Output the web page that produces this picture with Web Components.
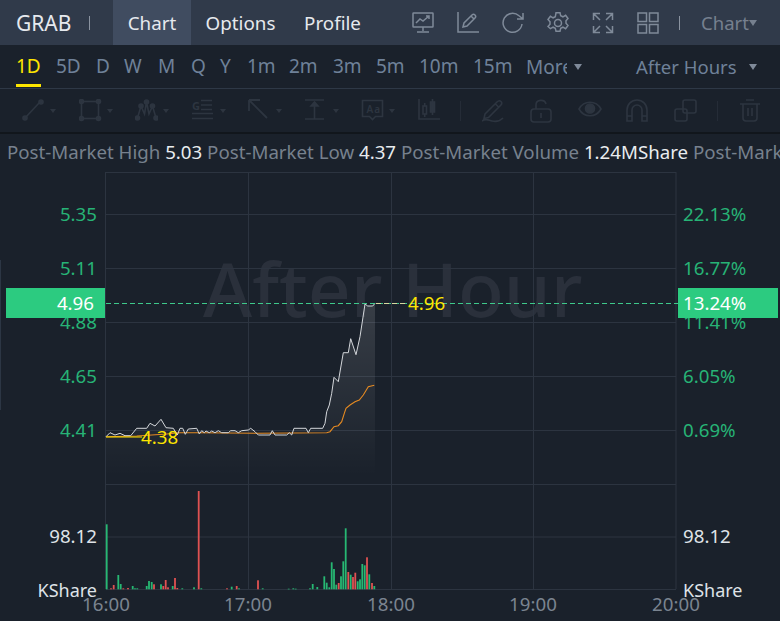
<!DOCTYPE html>
<html><head><meta charset="utf-8"><title>GRAB</title>
<style>
html,body{margin:0;padding:0;background:#1a212b;overflow:hidden}
body{width:780px;height:621px;font-family:"Noto Sans","Open Sans",sans-serif;font-size:18px}
</style></head>
<body>
<stock-app>
  <top-bar symbol="GRAB"></top-bar>
  <period-bar></period-bar>
  <draw-tools></draw-tools>
  <stat-strip></stat-strip>
  <price-chart></price-chart>
</stock-app>
<script>
const def=(name,html,setup)=>customElements.define(name,class extends HTMLElement{
  constructor(){super();this.attachShadow({mode:'open'}).innerHTML=html;}
  connectedCallback(){if(setup)setup(this);}
});
const svg=(w,h,body,extra='')=>`<svg width="${w}" height="${h}" viewBox="0 0 ${w} ${h}" fill="none" stroke="currentColor" ${extra}>${body}</svg>`;

def('stock-app',`<style>:host{display:flex;flex-direction:column;width:780px;height:621px;overflow:hidden;position:relative;background:#1a212b}
.edge{position:absolute;left:0;top:260px;width:1px;height:150px;background:#2c3644}</style><slot></slot><div class="edge"></div>`);

const topIcons=[
 `<rect x="1" y="1" width="20" height="14" rx=".5"/><path d="M4 11l4-4 3 2 6-5M14 4h3v3M11 15v4M5 20h12"/>`,
 `<path d="M1 0v20h21"/><path d="M6 15l1-4 8-8c1-1 2-1 3 0s1 2 0 3l-8 8zM14 4l3 3"/>`,
 `<path d="M20 12a9.5 9.5 0 1 1-3-8.2L21 7M21 1v6h-6"/>`,
 `<circle cx="11" cy="11" r="3.5"/><path d="M9 0.8h4l.7 3 2.2 1 2.7-1.5 2.4 3.2-2 2.2v2.6l2 2.2-2.4 3.2-2.7-1.5-2.2 1-.7 3H9l-.7-3-2.2-1-2.7 1.5L1 14.500l2-2.200V9.700L1 7.500l2.400-3.200 2.700 1.500 2.200-1z"/>`,
 `<path d="M1.500 8V1.500H8M20.500 8V1.500H14M1.500 14v6.500H8M20.500 14v6.500H14M2 2l6 6M20 2l-6 6M2 20l6-6M20 20l-6-6"/>`,
 `<rect x="1" y="1" width="8.500" height="8.500"/><rect x="12.500" y="1" width="8.500" height="8.500"/><rect x="1" y="12.500" width="8.500" height="8.500"/><rect x="12.500" y="12.500" width="8.500" height="8.500"/>`
];
def('top-bar',`<style>
:host{display:flex;align-items:stretch;height:45px;background:#303a4a;color:#e6e9ee;flex:none;white-space:nowrap;font-size:18.800px}
.sym{margin-left:16px;width:73px;align-self:center;font-size:21px}
.sep{width:1px;height:14px;background:#8a93a0;align-self:center}
.tabs{display:flex;margin-left:23px}
.tab{display:flex;align-items:center;justify-content:center}
.tab.on{background:#404c60}
.icons{display:flex;align-items:center;gap:23px;margin-left:37px;color:#7f8a99}
.icons svg{display:block;stroke-width:1.500}
.r{display:flex;align-items:center;margin-left:20px;gap:21px;color:#76808f;font-size:18.500px}
.car{width:0;height:0;border:4.500px solid transparent;border-top:6px solid #76808f;border-bottom:0;margin-left:-21px}
</style>
<div class="sym">GRAB</div><div class="sep"></div>
<div class="tabs"><div class="tab on" style="width:78px">Chart</div><div class="tab" style="width:99px">Options</div><div class="tab" style="width:85px">Profile</div></div>
<div class="icons">${topIcons.map(p=>svg(22,22,p)).join('')}</div>
<div class="r"><div class="sep"></div><span>Chart</span><i class="car"></i></div>`);

const periods=[['1D',40],['5D',40],['D',28],['W',34],['M',33],['Q',29],['Y',27],['1m',42],['2m',44],['3m',43],['5m',43],['10m',54],['15m',53]];
def('period-bar',`<style>
:host{display:flex;align-items:center;height:43px;flex:none;background:#1a212b;border-bottom:1px solid #2e3846;box-sizing:content-box;color:#6f8199;white-space:nowrap;position:relative;font-size:19px}
.list{display:flex;margin-left:16px}
.p{position:relative;line-height:43px;flex:none}
.p.on{color:#fde500}
.p.on::after{content:"";position:absolute;left:0;width:25px;bottom:1px;height:3px;background:#fde500}
.more{width:41px;overflow:hidden}
.car{width:0;height:0;border:4.500px solid transparent;border-top:6px solid #7f8a99;border-bottom:0;margin-left:7px}
.ah{margin-left:54px;font-size:18.500px}.c2{margin-left:12px}
</style>
<div class="list">${periods.map(([p,w],i)=>`<div class="p${i?'':' on'}" style="width:${w}px">${p}</div>`).join('')}</div>
<div class="more">More</div><i class="car"></i>
<div class="ah">After Hours</div><i class="car c2"></i>`);

const tools=[
 [`<path d="M3 19L18 3"/><circle cx="3" cy="19" r="2" fill="currentColor"/><circle cx="19" cy="3" r="2" fill="currentColor"/>`,1],
 [`<rect x="2.500" y="2.500" width="17" height="17"/><circle cx="2.500" cy="2.500" r="2" fill="currentColor"/><circle cx="19.500" cy="2.500" r="2" fill="currentColor"/><circle cx="2.500" cy="19.500" r="2" fill="currentColor"/><circle cx="19.500" cy="19.500" r="2" fill="currentColor"/>`,1],
 [`<path d="M2.500 19L6 7l3.500 8L11.500 3l2.500 12 3.500-8 3.500 12"/><circle cx="2.500" cy="19" r="2" fill="currentColor"/><circle cx="6" cy="7" r="2" fill="currentColor"/><circle cx="11.500" cy="3" r="2" fill="currentColor"/><circle cx="17.500" cy="7" r="2" fill="currentColor"/><circle cx="21" cy="19" r="2" fill="currentColor"/>`,1],
 [`<path d="M9 1.500h11M9 6h11M9 10.500h11M0 14.500h21M0 19.500h21"/><text x="0" y="11" font-family="Noto Sans" font-size="11" font-weight="700" fill="currentColor" stroke="none">G</text>`,1],
 [`<path d="M1 1l18 18M1 1v11M1 1h11" stroke-width="1.800"/>`,1],
 [`<path d="M0 1h19M0 20h19M9.500 3v17"/><path d="M6 7l3.500-4L13 7z" fill="currentColor"/>`,1],
 [`<path d="M1.500 1.500h20v16h-7l-3 3-3-3h-7z"/><text x="5.500" y="14" font-family="Noto Sans" font-size="10" font-weight="600" letter-spacing="1" fill="currentColor" stroke="none">Aa</text>`,1],
 [`<path d="M1 0v20h21"/><rect x="5" y="7" width="3.500" height="8"/><rect x="12.500" y="3" width="4" height="10" fill="currentColor"/><path d="M6.700 4v3M6.700 15v3M14.500 0v3M14.500 13v3"/>`,0],
];
const tools2=[
 `<path d="M3 15L15 3c1.500-1.500 3-1.500 4-.5s1 2.500-.5 4L6.500 18.500 2 19.500zM13.500 5l3.500 3.500M0 22c4-3 6-1 10 0s8 0 11-3"/>`,
 `<rect x="1" y="10" width="20" height="13" rx="3"/><path d="M6 10V6c0-6 9-6 10-1M11 14v5"/>`,
 `<path d="M1 10c5-9 17-9 22 0-5 9-17 9-22 0z"/><circle cx="12" cy="9.500" r="4.500" fill="currentColor"/>`,
 `<path d="M1 22V11a10 10 0 0 1 20 0v11h-5V11a5 5 0 0 0-10 0v11zM1 17h5M16 17h5"/>`,
 `<rect x="1" y="10" width="12" height="12" rx="2"/><rect x="9" y="1" width="13" height="13" rx="2"/>`
];
const trash=`<path d="M0 5h20M6 1h8M3 5v14c0 2 1 3 3 3h8c2 0 3-1 3-3V5M8 9v8M12 9v8"/>`;
def('draw-tools',`<style>
:host{display:flex;align-items:center;height:43px;flex:none;background:#1a212b;border-bottom:2px solid #11161c;color:#2d3540;padding-left:22px;box-sizing:content-box}
.t{display:flex;align-items:center;width:56.500px;flex:none}
svg{display:block;stroke-width:1.600}
.car{width:0;height:0;border:3px solid transparent;border-top:4px solid #2d3540;border-bottom:0;margin-left:5px}
.d{width:1px;height:20px;background:#252c37;flex:none}
.k{width:48px;flex:none}
</style>
${tools.map(([p,c])=>`<div class="t" style="${c?'':'width:42px'}">${svg(23,23,p)}${c?'<i class="car"></i>':''}</div>`).join('')}
<div class="d"></div><div style="width:21px;flex:none"></div>
${tools2.map(p=>`<div class="k">${svg(24,24,p)}</div>`).join('')}
<div class="d" style="margin-left:-5px"></div><div style="width:22px;flex:none"></div>${svg(21,23,trash)}`);

def('stat-strip',`<style>
:host{display:block;height:38px;line-height:36px;flex:none;padding-left:7px;color:#77818e;white-space:nowrap;overflow:hidden;background:#1a212b;font-size:18.700px}
b{font-weight:400;color:#e9ecef}
</style>Post-Market High <b>5.03</b> Post-Market Low <b>4.37</b> Post-Market Volume <b>1.24MShare</b> Post-Market Amount`);

const white=[[18,470],[30,458],[45,465],[60,460],[75,467],[92,467],[110,445],[140,445],[150,430],[165,438],[183,418],[198,443],[220,445],[232,465],[240,445],[248,445],[256,463],[265,447],[290,445],[298,462],[305,452],[313,458],[318,453],[328,458],[335,453],[345,458],[355,452],[365,458],[385,458],[392,452],[405,452],[415,458],[425,452],[445,450],[452,445],[465,455],[475,465],[510,465],[517,452],[525,465],[560,465],[568,458],[575,465],[582,445],[618,445],[625,458],[632,445],[668,445],[675,430],[680,395],[688,375],[695,340],[702,292],[715,305],[730,218],[745,218],[752,176],[768,224],[780,170],[795,72],[803,78],[818,78],[825,70]];
const orange=[[18,470],[110,468],[200,462],[240,458],[300,458],[470,460],[680,458],[690,455],[702,440],[715,437],[725,425],[733,400],[738,385],[750,375],[765,365],[778,360],[790,345],[805,320],[823,316]];
const vols=[['g',20,133],['r',33,325],['r',41,315],['g',55,285],['g',62,312],['r',70,325],['r',84,324],['g',98,318],['g',105,325],['g',112,325],['g',140,318],['g',147,303],['g',155,306],['r',162,313],['g',183,313],['r',190,318],['r',197,300],['r',204,322],['g',218,318],['r',225,294],['r',232,324],['g',247,325],['g',282,322],['r',296,33],['g',304,325],['r',381,325],['g',395,320],['r',410,318],['g',417,325],['r',474,301],['g',488,325],['g',566,326],['g',580,325],['g',587,326],['g',630,325],['g',638,312],['g',652,321],['g',673,289],['g',680,308],['g',688,322],['g',695,247],['g',702,267],['g',709,314],['r',716,309],['g',723,289],['g',730,244],['g',737,145],['r',745,276],['g',752,284],['r',759,291],['r',766,278],['g',773,304],['g',780,298],['g',787,252],['g',794,256],['r',801,232],['g',808,283],['r',816,309],['g',823,318]];
const Y0=172;
const mx=x=>(100+x/3).toFixed(1), my=y=>(280+y/3-Y0).toFixed(1);
const pts=a=>a.map(([x,y])=>mx(x)+','+my(y)).join(' ');
const grid=[0,214,268,322,376,430,484,536.5,589].map(y=>`<path d="M106 ${y?y-Y0+.5:.5}H676"/>`).join('')+[105.5,248.5,391.5,533.5,676].map(x=>`<path d="M${x} 0V${589-Y0}"/>`).join('');
const vb=vols.map(([c,x,y])=>`<rect x="${(100+x/3-.9).toFixed(1)}" y="${(480+y/3-Y0).toFixed(1)}" width="1.800" height="${((328-y)/3).toFixed(1)}" fill="${c=='g'?'#27b873':'#e05252'}"/>`).join('');
const lt=(y,t,x=97)=>`<text x="${x}" y="${y-Y0+6.500}" text-anchor="end">${t}</text>`;
const rt=(y,t)=>`<text x="683" y="${y-Y0+6.500}">${t}</text>`;
def('price-chart',`<style>
:host{display:block;flex:1;min-height:0;background:#1a212b}
svg{display:block;font-family:"Noto Sans","Open Sans",sans-serif;font-size:18.700px}
.k{font-size:18px}
</style>
<svg width="780" height="449" viewBox="0 0 780 449">
<defs><linearGradient id="g" x1="0" y1="0" x2="0" y2="1"><stop offset="0" stop-color="#fff" stop-opacity=".13"/><stop offset="1" stop-color="#fff" stop-opacity="0"/></linearGradient></defs>
<text x="203" y="145" font-size="75" font-weight="500" fill="#2a303b">After Hour</text>
<g stroke="#2c3440" stroke-width="1">${grid}</g>
<polygon points="${mx(18)},${480-Y0-4} ${pts(white)} ${mx(825)},${480-Y0-4}" fill="url(#g)"/>
<polyline points="${pts(orange)}" fill="none" stroke="#e58a22" stroke-width="1.100"/>
<polyline points="${pts(white)}" fill="none" stroke="#d4d7db" stroke-width="1"/>
<path d="M106 ${437-Y0}H142" stroke="#fde500" stroke-width="1"/>
<text x="141" y="${437-Y0+6.500}" fill="#fde500">4.38</text>
${vb}
<path d="M106 ${303-Y0+.5}H678" stroke="#3ec98b" stroke-dasharray="5 3"/>
<path d="M376 ${303-Y0+.5}H408" stroke="#d8d8a0" stroke-dasharray="5 3"/>
<text x="408" y="${303-Y0+6.500}" fill="#fde500">4.96</text>
<g fill="#27b376">${lt(214,'5.35')}${lt(268,'5.11')}${lt(322,'4.88')}${lt(376,'4.65')}${lt(430,'4.41')}
${rt(214,'22.13%')}${rt(268,'16.77%')}${rt(322,'11.41%')}${rt(376,'6.05%')}${rt(430,'0.69%')}</g>
<rect x="6" y="${288-Y0}" width="99" height="30" fill="#2ccb80"/>
<rect x="678" y="${288-Y0}" width="100" height="30" fill="#2ccb80"/>
<g fill="#fff">${lt(303,'4.96',94)}${rt(303,'13.24%')}</g>
<g fill="#dfe3e8">${lt(536,'98.12')}${rt(536,'98.12')}<g class="k">${lt(590,'KShare')}${rt(590,'KShare')}</g></g>
<g fill="#7a8490" text-anchor="middle">
<text x="106" y="${604-Y0+6.500}">16:00</text><text x="248" y="${604-Y0+6.500}">17:00</text><text x="391" y="${604-Y0+6.500}">18:00</text><text x="533" y="${604-Y0+6.500}">19:00</text><text x="676" y="${604-Y0+6.500}">20:00</text></g>
</svg>`);
</script>
</body></html>
